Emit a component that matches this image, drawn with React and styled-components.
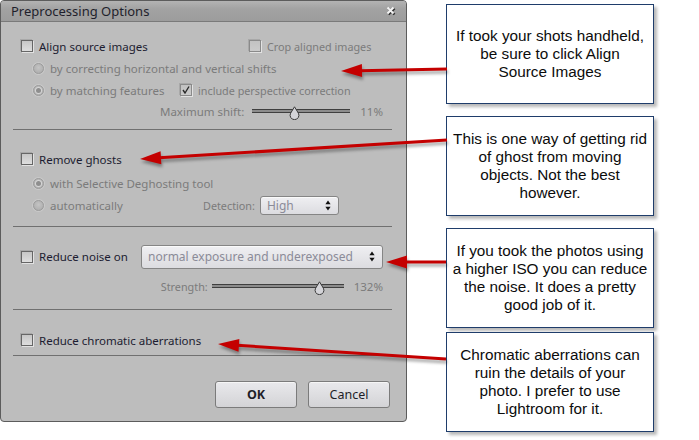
import React from "react";
import styled, { createGlobalStyle } from "styled-components";

const GlobalStyle = createGlobalStyle`
  html, body {
    margin: 0;
    padding: 0;
    background: #ffffff;
  }
  body {
    width: 699px;
    height: 440px;
    overflow: hidden;
  }
`;

const Page = styled.div`
  position: relative;
  display: flex;
  align-items: flex-start;
  width: 699px;
  height: 440px;
  background: #fff;
`;

const Dialog = styled.div`
  box-sizing: border-box;
  width: 407px;
  height: 422px;
  display: flex;
  flex-direction: column;
  border: 1px solid #5c5c5c;
  border-radius: 4px;
  background: #bdbdbd;
  overflow: hidden;
  font-family: "Noto Sans", "Open Sans", sans-serif;
  font-size: 11.5px;
  color: #1c1c30;
`;

const TitleBar = styled.div`
  height: 20px;
  flex: none;
  display: flex;
  align-items: center;
  justify-content: space-between;
  padding: 0 10px 0 10px;
  background: linear-gradient(#b3b3b3, #a2a2a2 40%, #9c9c9c);
  border-bottom: 1px solid #7a7a7a;
  font-size: 13px;
  color: #1f1f2c;
`;

const Body = styled.div`
  display: flex;
  flex-direction: column;
  padding: 0 14px 0 12px;
`;

const Row = styled.div`
  display: flex;
  align-items: center;
  height: ${(p) => p.$h || 22}px;
  margin-top: ${(p) => p.$mt || 0}px;
  padding-left: ${(p) => p.$indent || 0}px;
  padding-right: ${(p) => p.$pr || 0}px;
  justify-content: ${(p) => (p.$end ? "flex-end" : "flex-start")};
  gap: ${(p) => p.$gap || 0}px;
`;

const Rule = styled.div`
  height: 1px;
  margin-top: ${(p) => p.$mt || 0}px;
  background: #707070;
`;

const Label = styled.span`
  white-space: nowrap;
  color: ${(p) => (p.$disabled ? "#7b7b7b" : "#1c1c30")};
  width: ${(p) => (p.$w ? `${p.$w}px` : "auto")};
  flex: none;
  margin-left: ${(p) => p.$ml || 0}px;
  margin-right: ${(p) => p.$mr || 0}px;
  font-size: ${(p) => (p.$small ? "10.8px" : "inherit")};
`;

const Box = styled.span`
  box-sizing: border-box;
  position: relative;
  flex: none;
  width: 12px;
  height: 12px;
  margin-right: 6px;
  border: 1px solid ${(p) => (p.$disabled ? "#8a8a8a" : "#666")};
  background: ${(p) =>
    p.$disabled
      ? "linear-gradient(#c2c2c2, #cbcbcb)"
      : "linear-gradient(#c6c6c6, #dedede)"};
  box-shadow: 1px 1px 0 #e2e2e2, -1px -1px 0 #a8a8a8;
`;

const Radio = styled.span`
  box-sizing: border-box;
  position: relative;
  flex: none;
  width: 11px;
  height: 11px;
  margin-right: 6px;
  border-radius: 50%;
  border: 1px solid #9c9c9c;
  background: radial-gradient(circle at 50% 40%, #c4c4c4, #a9a9a9);
  box-shadow: 0 0 0 1px #cacaca;

  &::after {
    content: "";
    display: ${(p) => (p.$on ? "block" : "none")};
    position: absolute;
    left: 2px;
    top: 2px;
    width: 5px;
    height: 5px;
    border-radius: 50%;
    background: #8e8e8e;
    box-shadow: 0 0 0 1px #d6d6d6;
  }
`;

const CheckMark = styled.svg`
  position: absolute;
  left: 0;
  top: 0;
`;

const Check = ({ disabled, checked }) => (
  <Box $disabled={disabled}>
    {checked && (
      <CheckMark width="10" height="10" viewBox="0 0 10 10">
        <path d="M2 5 L4 8 L8 1.5" fill="none" stroke="#2a2a2a" strokeWidth="1.4" />
      </CheckMark>
    )}
  </Box>
);

const SliderWrap = styled.div`
  position: relative;
  flex: none;
  width: ${(p) => p.$w}px;
  height: 20px;
  margin: 0 10px 0 ${(p) => p.$ml || 8}px;
`;

const Track = styled.div`
  position: absolute;
  left: 0;
  right: 0;
  top: 8px;
  height: 2px;
  border-top: 1px solid #3f3f3f;
  border-bottom: 1px solid #3f3f3f;
  background: #8c8c8c;
`;

const Thumb = styled.svg`
  position: absolute;
  top: 5px;
  left: ${(p) => p.$pos * 100}%;
  margin-left: -5.5px;
`;

const Slider = ({ width, pos, ml }) => (
  <SliderWrap $w={width} $ml={ml}>
    <Track />
    <Thumb $pos={pos} width="11" height="14" viewBox="0 0 11 14">
      <path
        d="M5.5 0.8 L9.4 7.2 A4.4 4.4 0 1 1 1.6 7.2 Z"
        fill="#d4d4d8"
        stroke="#3a3a3a"
        strokeWidth="1"
      />
    </Thumb>
  </SliderWrap>
);

const SelectBox = styled.div`
  box-sizing: border-box;
  flex: none;
  display: flex;
  align-items: center;
  justify-content: space-between;
  width: ${(p) => p.$w}px;
  height: ${(p) => p.$h}px;
  padding: 0 7px 0 6px;
  margin-left: ${(p) => p.$ml || 0}px;
  border: 1px solid #858585;
  border-radius: 3px;
  background: linear-gradient(#efeff2, #dcdce0);
  box-shadow: inset 0 1px 0 #fafafa;
  color: #8b8b98;
  font-size: 12px;
`;

const Spinner = () => (
  <svg width="6" height="11" viewBox="0 0 6 11">
    <path d="M3 0.5 L5.6 4.3 L0.4 4.3 Z" fill="#111" />
    <path d="M3 10.5 L5.6 6.7 L0.4 6.7 Z" fill="#111" />
  </svg>
);

const Select = ({ w, h, ml, children }) => (
  <SelectBox $w={w} $h={h} $ml={ml}>
    <span>{children}</span>
    <Spinner />
  </SelectBox>
);

const Button = styled.button`
  box-sizing: border-box;
  width: 82px;
  height: 27px;
  border: 1px solid #7b7b7b;
  border-radius: 3px;
  background: linear-gradient(#e9e9ec, #d3d3d6);
  box-shadow: inset 0 1px 0 #f6f6f6;
  font-family: "Noto Sans", "Open Sans", sans-serif;
  font-size: 12.5px;
  font-weight: ${(p) => (p.$primary ? 700 : 400)};
  color: #1e1e28;
  padding: 0;
`;

const CloseIcon = () => (
  <svg width="10" height="10" viewBox="0 0 10 10">
    <path d="M2.5 2.5 L8.5 8.5 M8.5 2.5 L2.5 8.5" stroke="#303030" strokeWidth="2.4" />
    <path d="M1.5 1.5 L7.5 7.5 M7.5 1.5 L1.5 7.5" stroke="#f4f4f4" strokeWidth="2" />
  </svg>
);

const Notes = styled.div`
  display: flex;
  flex-direction: column;
  margin-left: 39px;
  padding-top: 4px;
`;

const Note = styled.div`
  box-sizing: border-box;
  width: 208px;
  height: 100px;
  margin-top: ${(p) => p.$mt || 0}px;
  display: flex;
  align-items: center;
  justify-content: center;
  text-align: center;
  border: 1px solid #1f3d6b;
  background: #fff;
  box-shadow: 3px 3px 3px rgba(0, 0, 0, 0.28);
  font-family: "Liberation Sans", Arial, sans-serif;
  font-size: 15.3px;
  line-height: 18px;
  color: #0c0c0c;
  white-space: nowrap;
`;

const Arrows = styled.svg`
  position: absolute;
  left: 0;
  top: 0;
  pointer-events: none;
  filter: drop-shadow(1px 3px 1.5px rgba(0, 0, 0, 0.35));
`;

const arrows = [
  { from: [447, 69], to: [341, 71] },
  { from: [447, 140], to: [140, 159] },
  { from: [446, 262], to: [386, 262] },
  { from: [446, 359], to: [218, 344] },
];

const Arrow = ({ from, to }) => {
  const dx = to[0] - from[0];
  const dy = to[1] - from[1];
  const len = Math.hypot(dx, dy);
  const ux = dx / len;
  const uy = dy / len;
  const headLen = 21;
  const half = 6.5;
  const bx = to[0] - ux * headLen;
  const by = to[1] - uy * headLen;
  const p1 = [bx - uy * half, by + ux * half];
  const p2 = [bx + uy * half, by - ux * half];
  return (
    <g>
      <line
        x1={from[0]}
        y1={from[1]}
        x2={bx + ux * 2}
        y2={by + uy * 2}
        stroke="#c40000"
        strokeWidth="3"
      />
      <polygon
        points={`${to[0]},${to[1]} ${p1[0]},${p1[1]} ${p2[0]},${p2[1]}`}
        fill="#c40000"
      />
    </g>
  );
};

export default function App() {
  return (
    <>
      <GlobalStyle />
      <Page>
        <Dialog>
          <TitleBar>
            <span>Preprocessing Options</span>
            <CloseIcon />
          </TitleBar>
          <Body>
            <Row $mt={13} $indent={8}>
              <Check />
              <Label $w={210}>Align source images</Label>
              <Check disabled />
              <Label $disabled $small>Crop aligned images</Label>
            </Row>
            <Row $indent={20}>
              <Radio />
              <Label $disabled>by correcting horizontal and vertical shifts</Label>
            </Row>
            <Row $indent={20}>
              <Radio $on />
              <Label $disabled $w={130}>by matching features</Label>
              <Check disabled checked />
              <Label $disabled $small>include perspective correction</Label>
            </Row>
            <Row $h={20} $end $pr={9}>
              <Label $disabled>Maximum shift:</Label>
              <Slider width={98} pos={0.43} ml={8} />
              <Label $disabled>11%</Label>
            </Row>
            <Rule $mt={8} />

            <Row $mt={18} $indent={8}>
              <Check />
              <Label>Remove ghosts</Label>
            </Row>
            <Row $mt={2} $indent={20}>
              <Radio $on />
              <Label $disabled>with Selective Deghosting tool</Label>
            </Row>
            <Row $indent={20}>
              <Radio />
              <Label $disabled $w={153}>automatically</Label>
              <Label $disabled $small>Detection:</Label>
              <Select w={79} h={19} ml={5}>
                High
              </Select>
            </Row>
            <Rule $mt={10} />

            <Row $mt={18} $h={23} $indent={8}>
              <Check />
              <Label $w={102}>Reduce noise on</Label>
              <Select w={242} h={24}>
                normal exposure and underexposed
              </Select>
            </Row>
            <Row $mt={8} $h={20} $end $pr={9}>
              <Label $disabled $small>Strength:</Label>
              <Slider width={132} pos={0.82} ml={4} />
              <Label $disabled>132%</Label>
            </Row>
            <Rule $mt={13} />

            <Row $mt={19} $indent={8}>
              <Check />
              <Label>Reduce chromatic aberrations</Label>
            </Row>
            <Rule $mt={4} />

            <Row $mt={25} $h={27} $end $pr={2} $gap={11}>
              <Button $primary>OK</Button>
              <Button>Cancel</Button>
            </Row>
          </Body>
        </Dialog>

        <Notes>
          <Note>
            <div>
              If took your shots handheld,
              <br />
              be sure to click Align
              <br />
              Source Images
            </div>
          </Note>
          <Note $mt={12}>
            <div>
              This is one way of getting rid
              <br />
              of ghost from moving
              <br />
              objects. Not the best
              <br />
              however.
            </div>
          </Note>
          <Note $mt={12}>
            <div>
              If you took the photos using
              <br />
              a higher ISO you can reduce
              <br />
              the noise. It does a pretty
              <br />
              good job of it.
            </div>
          </Note>
          <Note $mt={4}>
            <div>
              Chromatic aberrations can
              <br />
              ruin the details of your
              <br />
              photo. I prefer to use
              <br />
              Lightroom for it.
            </div>
          </Note>
        </Notes>

        <Arrows width="699" height="440" viewBox="0 0 699 440">
          {arrows.map((a, i) => (
            <Arrow key={i} from={a.from} to={a.to} />
          ))}
        </Arrows>
      </Page>
    </>
  );
}
